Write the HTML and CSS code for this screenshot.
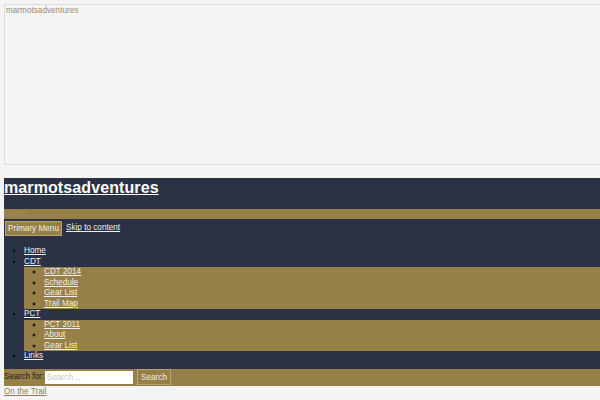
FILE: index.html
```html
<!DOCTYPE html>
<html lang="en">

<head>
    <meta charset="UTF-8">
    <meta name="viewport" content="width=device-width, initial-scale=1.0">
    <title>marmotsadventures</title>
    <link rel="stylesheet" href="styles.css">
</head>

<body>
    <div class="header-image">marmotsadventures</div>

    <header class="site-header">
        <h1 class="site-title"><a href="#">marmotsadventures</a></h1>
        <p class="site-description">Hiking</p>

        <div class="menu-bar">
            <button class="menu-toggle">Primary Menu</button>
            <a class="skip-link" href="#">Skip to content</a>
        </div>

        <ul class="menu">
            <li><a href="#">Home</a></li>
            <li><a href="#">CDT</a>
                <ul class="sub-menu">
                    <li><a href="#">CDT 2014</a></li>
                    <li><a href="#">Schedule</a></li>
                    <li><a href="#">Gear List</a></li>
                    <li><a href="#">Trail Map</a></li>
                </ul>
            </li>
            <li><a href="#">PCT</a>
                <ul class="sub-menu">
                    <li><a href="#">PCT 2011</a></li>
                    <li><a href="#">About</a></li>
                    <li><a href="#">Gear List</a></li>
                </ul>
            </li>
            <li><a href="#">Links</a></li>
        </ul>
    </header>

    <form class="search-form">
        <label for="s">Search for:</label>
        <input type="search" id="s" class="search-field" placeholder="Search …">
        <button type="button" class="search-submit">Search</button>
    </form>

    <a class="trail-link" href="#">On the Trail</a>
</body>

</html>
```

FILE: styles.css
```css
body {
    margin: 4px 0 0 4px;
    background-color: #f4f4f4;
    font-family: "Liberation Sans", Arial, sans-serif;
    font-size: 8.2px;
    line-height: 10.5px;
    overflow: hidden;
}

.header-image {
    box-sizing: border-box;
    height: 161px;
    padding: 1px 1px 0;
    border: 1px solid #dcdcdc;
    border-right: none;
    color: #9d8e6e;
}

.site-header {
    margin-top: 13px;
    background-color: #2c3245;
    padding-bottom: 7px;
}

.site-title {
    margin: 0;
    font-size: 16px;
    line-height: 20px;
    font-weight: bold;
    letter-spacing: 0.1px;
}

.site-title a {
    color: #ffffff;
}

.site-description {
    margin: 11px 0 0;
    height: 10px;
    background-color: #968048;
    color: #a08b52;
    line-height: 10px;
}

.menu-bar {
    margin-top: 2px;
    display: flex;
    align-items: center;
    gap: 4px;
}

.menu-toggle {
    margin: 0 0 0 1px;
    padding: 1px 2px;
    height: 15px;
    background-color: #968048;
    border: 1px solid #b3a478;
    color: #f0ece0;
    font-family: inherit;
    font-size: 8.2px;
    line-height: 11px;
}

.skip-link {
    color: #f0f0f0;
}

.menu {
    margin: 10px 0 0;
    padding-left: 20px;
    list-style: disc;
    color: #000000;
}

.menu a {
    color: #f0f0f0;
}

.sub-menu {
    margin: 0;
    padding-left: 20px;
    background-color: #968048;
    list-style: circle;
}

.search-form {
    display: flex;
    align-items: center;
    height: 17px;
    background-color: #968048;
    color: #1e1e1e;
}

.search-form label {
    margin-right: 1px;
}

.search-field {
    width: 88px;
    height: 13px;
    box-sizing: border-box;
    margin: 0;
    padding: 0 2px;
    border: none;
    background: #ffffff;
    font-family: inherit;
    font-size: 8.2px;
}

.search-field::placeholder {
    color: #c8c8c8;
}

.search-submit {
    margin-left: 4px;
    height: 16px;
    padding: 0 3px;
    background-color: #968048;
    border: 1px solid #b3a478;
    color: #f0ece0;
    font-family: inherit;
    font-size: 8.2px;
}

.trail-link {
    display: block;
    margin-top: 1px;
    color: #8c7c5a;
}
```
